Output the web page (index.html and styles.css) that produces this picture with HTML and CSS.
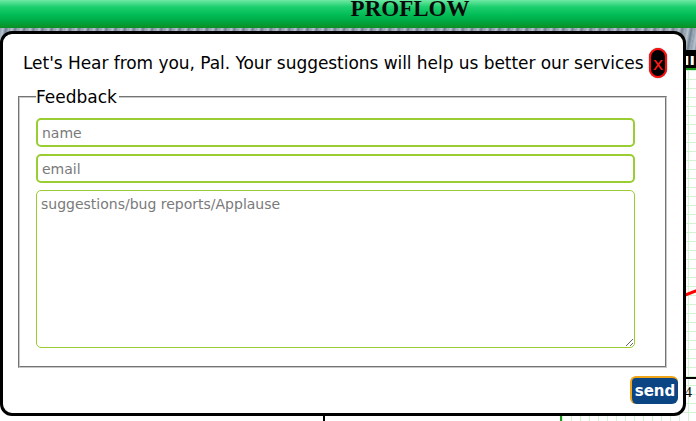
FILE: index.html
```html
<!DOCTYPE html>
<html lang="en">
<head>
<meta charset="utf-8">
<title>PROFLOW</title>
<link rel="stylesheet" href="styles.css">
</head>
<body>
<div class="app">
  <header class="topbar"><span class="brand">PROFLOW</span></header>
  <div class="band"></div>
  <div class="workspace">
    <div class="side">
      <div class="side-line"></div>
    </div>
    <div class="canvas">
      <div class="toolbar"><span class="tb-text">ıı ıı</span></div>
      <div class="grid">
        <svg class="edge" width="136" height="20" viewBox="0 0 136 20"><line x1="100" y1="18" x2="136" y2="4" stroke="#ff0000" stroke-width="3"/></svg>
        <div class="row-line"><span class="cell-num">4</span></div>
      </div>
    </div>
  </div>
</div>

<div class="modal" role="dialog">
  <div class="modal-head">
    <p class="modal-title">Let's Hear from you, Pal. Your suggestions will help us better our services</p>
    <button class="close-btn" type="button">x</button>
  </div>
  <form class="feedback-form">
    <fieldset class="fb-fieldset">
      <legend class="fb-legend">Feedback</legend>
      <input class="fb-input" type="text" placeholder="name">
      <input class="fb-input" type="email" placeholder="email">
      <textarea class="fb-text" placeholder="suggestions/bug reports/Applause"></textarea>
    </fieldset>
    <div class="modal-foot"><button class="send-btn" type="button">send</button></div>
  </form>
</div>
</body>
</html>
```

FILE: styles.css
```css
html, body {
  margin: 0;
  padding: 0;
  width: 696px;
  height: 421px;
  overflow: hidden;
  background: #fff;
}

.app {
  display: flex;
  flex-direction: column;
  height: 421px;
}

.topbar {
  height: 28px;
  background: linear-gradient(to bottom, #6fe8a4 0%, #1ccf6e 25%, #00bb55 55%, #00a844 75%, #0b8f22 100%);
  display: flex;
  justify-content: center;
  align-items: flex-start;
  padding-left: 124px;
}

.brand {
  font-family: "Liberation Serif", serif;
  font-weight: bold;
  font-size: 23px;
  line-height: 18px;
  color: #0a0a0a;
}

.band {
  height: 22px;
  background: repeating-linear-gradient(100deg, #8f9cab 0px, #b8c3cc 3px, #6f7f92 6px, #a4b0bc 9px);
}

.workspace {
  flex: 1;
  display: flex;
}

.side {
  width: 560px;
  background: #fff;
  position: relative;
}

.side-line {
  position: absolute;
  left: 323px;
  top: 355px;
  width: 2px;
  height: 20px;
  background: #000;
}

.canvas {
  flex: 1;
  display: flex;
  flex-direction: column;
  border-left: 2px solid #1a9a1a;
}

.toolbar {
  height: 18px;
  background: #000;
  border-bottom: 2px solid #1a9a1a;
  display: flex;
  justify-content: flex-end;
  align-items: center;
}

.tb-text {
  color: #fff;
  font-family: "DejaVu Sans", sans-serif;
  font-weight: bold;
  font-size: 16px;
  padding-right: 1px;
}

.grid {
  flex: 1;
  position: relative;
  background-color: #fff;
  background-image:
    linear-gradient(to right, #d3f3d3 1px, transparent 1px),
    linear-gradient(to bottom, #d3f3d3 1px, transparent 1px);
  background-size: 9px 9px;
}

.edge {
  position: absolute;
  left: 0;
  top: 216px;
}

.row-line {
  position: absolute;
  left: 0;
  right: 0;
  top: 307px;
  border-top: 2px solid #000;
  display: flex;
  justify-content: flex-end;
}

.cell-num {
  font-family: "Liberation Serif", serif;
  font-size: 15px;
  line-height: 16px;
  margin-top: 5px;
  margin-right: 4px;
  color: #000;
}

/* ---------- modal ---------- */
.modal {
  position: absolute;
  left: 0;
  top: 31px;
  width: 686px;
  height: 385px;
  box-sizing: border-box;
  border: 3px solid #000;
  border-radius: 12px;
  background: #fff;
  display: flex;
  flex-direction: column;
  font-family: "Comic Sans MS", "DejaVu Sans", sans-serif;
}

.modal-head {
  display: flex;
  align-items: center;
  justify-content: space-between;
  height: 30px;
  padding: 14px 16px 0 20px;
}

.modal-title {
  margin: 0;
  font-size: 17px;
  letter-spacing: -0.05px;
  color: #000;
  white-space: nowrap;
}

.close-btn {
  width: 18px;
  height: 30px;
  box-sizing: border-box;
  padding: 2px 0 0 0;
  border: 2px solid #ff1010;
  border-radius: 9px;
  background: #000;
  color: #ff1a1a;
  font-family: "DejaVu Sans", sans-serif;
  font-size: 18px;
  line-height: 18px;
  display: flex;
  align-items: center;
  justify-content: center;
  box-shadow: 0 0 1px #600;
}

.feedback-form {
  margin: 0;
  display: flex;
  flex-direction: column;
}

.fb-fieldset {
  margin: 9px 16px 0 15px;
  padding: 11px 16px 18px 16px;
  border: 2px groove #c8c8c8;
  display: flex;
  flex-direction: column;
  gap: 7px;
}

.fb-legend {
  padding: 0 2px 0 0;
  font-size: 17px;
  line-height: 20px;
  color: #000;
}

.fb-input {
  width: 599px;
  height: 29px;
  box-sizing: border-box;
  margin: 0;
  padding: 1px 4px 0 4px;
  border: 2px solid #9acd32;
  border-radius: 5px;
  font-family: "Comic Sans MS", "DejaVu Sans", sans-serif;
  font-size: 14px;
  color: #000;
  outline: none;
}

.fb-text {
  width: 599px;
  height: 158px;
  box-sizing: border-box;
  margin: 0;
  padding: 5px 4px 4px 4px;
  border: 1px solid #9acd32;
  border-radius: 5px;
  font-family: "Comic Sans MS", "DejaVu Sans", sans-serif;
  font-size: 14px;
  color: #000;
  outline: none;
}

.fb-input::placeholder,
.fb-text::placeholder {
  color: #7a7a7a;
}

.modal-foot {
  display: flex;
  justify-content: flex-end;
  padding: 8px 5px 0 0;
}

.send-btn {
  width: 48px;
  height: 28px;
  box-sizing: border-box;
  padding: 0 0 1px 0;
  border: 0;
  border-top: 2px solid #f0a418;
  border-left: 2px solid #f0a418;
  border-radius: 6px;
  background: #0b4584;
  color: #fff;
  font-family: "Comic Sans MS", "DejaVu Sans", sans-serif;
  font-weight: bold;
  font-size: 15px;
}
```
